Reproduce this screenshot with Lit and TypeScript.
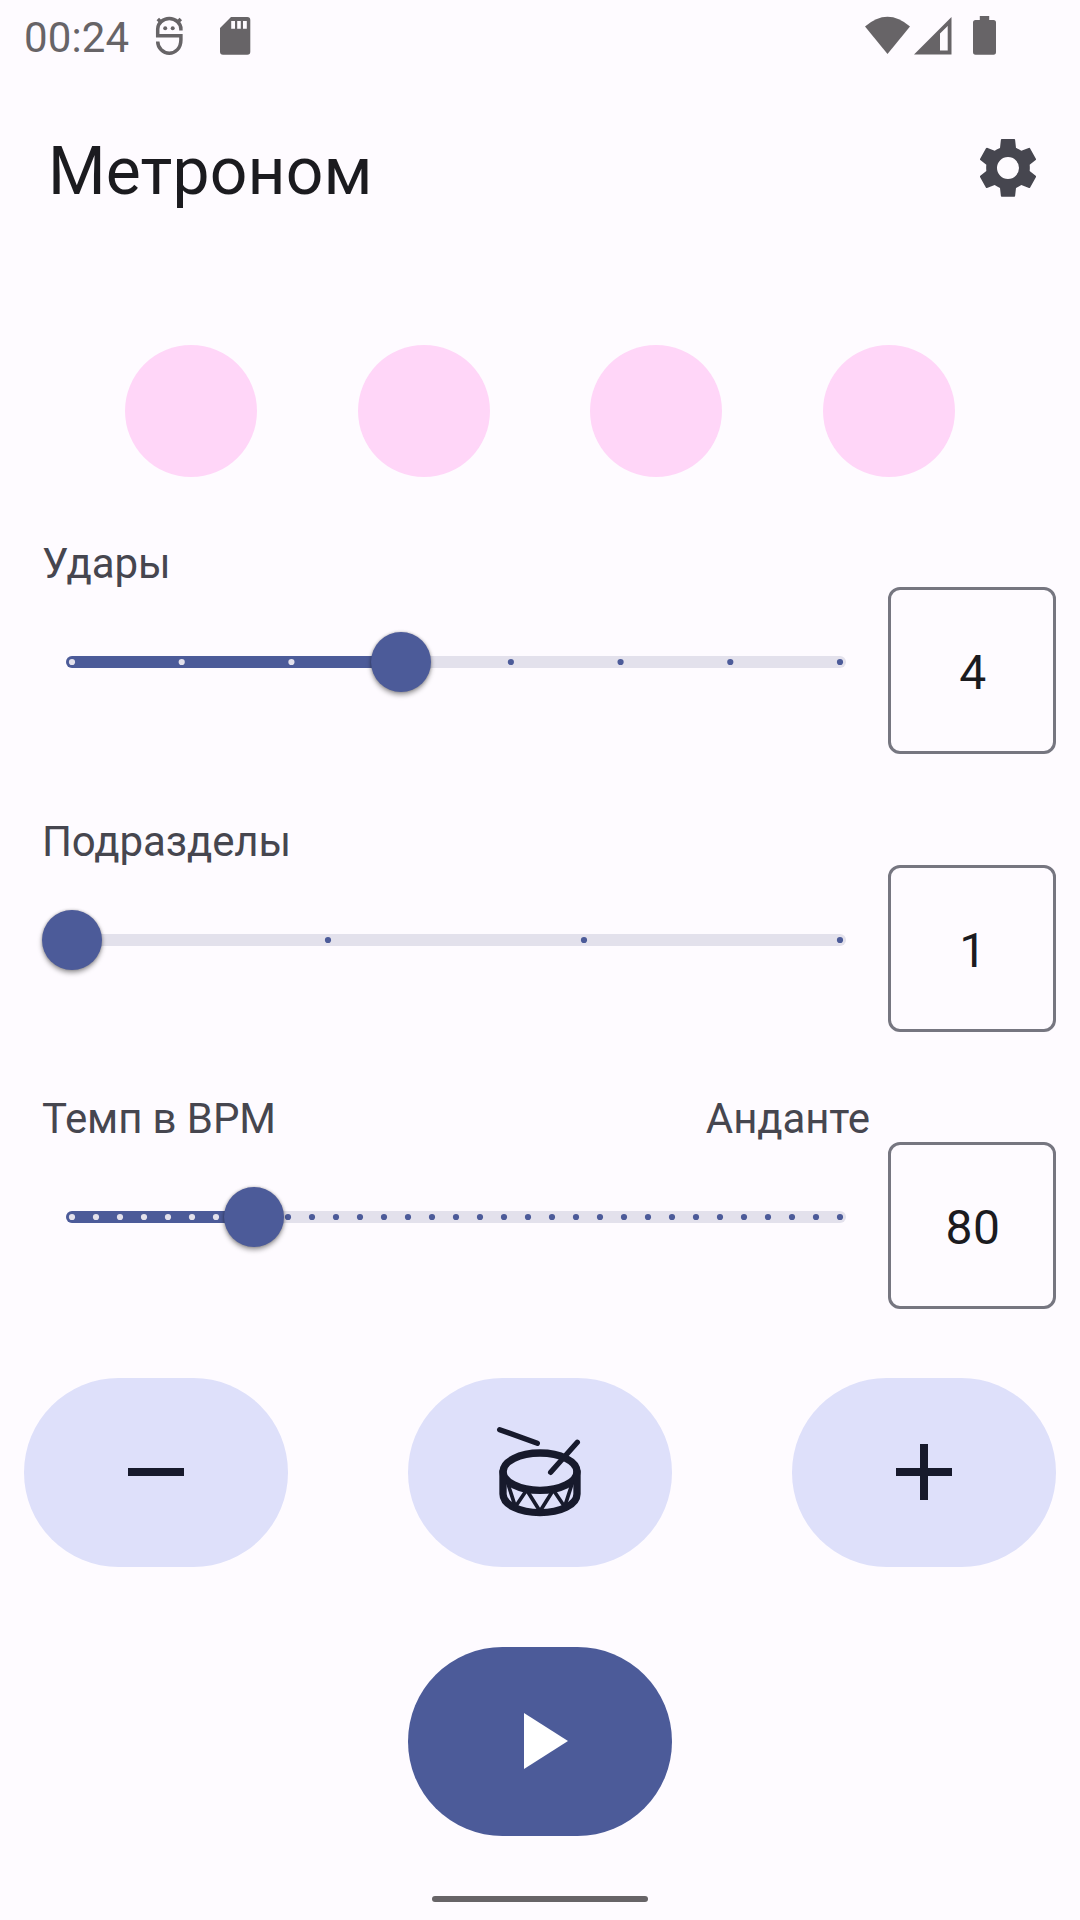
import { LitElement, html, svg, css } from "lit";
import { customElement, property } from "lit/decorators.js";

@customElement("value-slider")
class ValueSlider extends LitElement {
  @property({ type: Number }) steps = 7;
  @property({ type: Number }) fraction = 0;

  static styles = css`
    :host { display: block; position: relative; height: 60px; }
    svg { display: block; overflow: visible; }
    .track { fill: #e3e1ec; }
    .fill { fill: #4c5b99; }
    .tick { fill: #4c5b99; }
    .tick.on { fill: #e3e1ec; }
    .thumb {
      position: absolute; top: 0; width: 60px; height: 60px; border-radius: 50%;
      background: #4c5b99;
      box-shadow: 0 3px 5px rgba(0, 0, 0, 0.36), 0 0 3px rgba(0, 0, 0, 0.25);
    }
  `;

  render() {
    const pos = this.fraction * 768;
    const ticks = Array.from({ length: this.steps + 1 }, (_, i) => (i * 768) / this.steps);
    return html`
      <svg width="828" height="60" viewBox="0 0 828 60">
        <rect class="track" x="24" y="24" width="780" height="12" rx="6"></rect>
        <rect class="fill" x="24" y="24" width=${pos + 12} height="12" rx="6"></rect>
        ${ticks.map((t) => svg`<circle class="tick ${t <= pos ? "on" : ""}" cx=${30 + t} cy="30" r="3.1"></circle>`)}
      </svg>
      <div class="thumb" style="left:${pos}px"></div>
    `;
  }
}

@customElement("setting-row")
class SettingRow extends LitElement {
  @property() label = "";
  @property() note = "";
  @property() value = "";
  @property({ type: Number }) steps = 7;
  @property({ type: Number }) fraction = 0;

  static styles = css`
    :host { display: flex; justify-content: space-between; height: 214px; padding: 0 24px 0 42px; box-sizing: border-box; }
    .main { width: 828px; }
    .labels { display: flex; justify-content: space-between; height: 59px; line-height: 60px; padding-top: 1px; margin-bottom: 39px; font-size: 42px; letter-spacing: -0.1px; color: #46464f; }
    .box {
      box-sizing: border-box; width: 168px; height: 167px; margin-top: 54px;
      border: 3px solid #767680; border-radius: 12px;
      display: flex; align-items: center; justify-content: center;
      padding: 4px 0 0 2px; font-size: 48px; letter-spacing: 0.6px; color: #1b1b1f;
    }
  `;

  render() {
    return html`
      <div class="main">
        <div class="labels"><span>${this.label}</span><span>${this.note}</span></div>
        <value-slider .steps=${this.steps} .fraction=${this.fraction}></value-slider>
      </div>
      <div class="box">${this.value}</div>
    `;
  }
}

@customElement("app-root")
class AppRoot extends LitElement {
  static styles = css`
    :host {
      display: flex; flex-direction: column; width: 1080px; height: 1920px; overflow: hidden;
      background: #fefbff; color: #1b1b1f; font-family: Roboto, sans-serif;
    }
    svg { display: block; flex: none; }
    .status { display: flex; align-items: center; height: 72px; padding: 0 83px 0 24px; color: #676467; fill: currentColor; }
    .time { width: 128px; margin-top: 4px; font-size: 42px; line-height: 50px; letter-spacing: 0.1px; }
    .spacer { flex: 1; }
    .bar { display: flex; align-items: center; justify-content: space-between; height: 192px; padding: 0 36px 0 48px; }
    h1 { margin: 8px 0 0; font-size: 66px; font-weight: 400; line-height: 84px; letter-spacing: 0.15px; }
    .gear { fill: #46464f; }
    .beats { display: flex; justify-content: space-between; padding: 0 125px; margin-top: 81px; }
    .beat { width: 132px; height: 132px; border-radius: 50%; background: #ffd6f8; }
    .rows { display: flex; flex-direction: column; margin-top: 56px; gap: 64px; }
    .rows > :last-child { margin-top: -1px; }
    .actions { display: flex; justify-content: space-between; padding: 0 24px; margin-top: 76px; }
    .btn { display: flex; align-items: center; justify-content: center; box-sizing: border-box; width: 264px; height: 189px; padding-bottom: 1px; border-radius: 95px; background: #dee0fa; color: #171a2c; }
    .play { align-self: center; margin-top: 80px; background: #4c5b99; color: #fff; }
    .handle { align-self: center; width: 216px; height: 6px; border-radius: 3px; background: #676467; margin-top: 60px; }
  `;

  render() {
    return html`
      <div class="status">
        <span class="time">00:24</span>
        <svg width="34" height="44" viewBox="152 14 34 44" fill="none" stroke="currentColor" stroke-width="3.500">
          <path d="M180.900 30.500V29A11.600 10.500 0 0 0 157.700 29V35.700H180.900V40C180.900 48 175.500 53.200 169.300 53.200S157.700 48 157.700 41.500"></path>
          <path d="M157.800 19l4 4M180.800 19l-4 4"></path>
          <circle cx="165.200" cy="28.300" r="2" fill="currentColor" stroke="none"></circle>
          <circle cx="172.700" cy="28.300" r="2" fill="currentColor" stroke="none"></circle>
        </svg>
        <svg width="72" height="44" viewBox="186 14 72 44">
          <path fill-rule="evenodd" d="M231 17H247.300Q250.300 17 250.300 20V51.800Q250.300 54.800 247.300 54.800H223Q220 54.800 220 51.800V28ZM231.200 21V28.800H235V21ZM237.200 21V28.800H240.800V21ZM243 21V28.800H246.800V21Z"></path>
        </svg>
        <span class="spacer"></span>
        <svg width="136" height="44" viewBox="861 14 136 44">
          <path d="M865 26.500Q887.500 7 910 26.500L887.500 54Z"></path>
          <path fill-rule="evenodd" d="M951.500 17V54.500H914ZM947.700 26L940 33.500V50.500H947.700Z"></path>
          <path d="M979.800 16H989.200V20H993.500Q996 20 996 22.500V52Q996 54.700 993.500 54.700H975.500Q973 54.700 973 52V22.500Q973 20 975.500 20H979.800Z"></path>
        </svg>
      </div>
      <div class="bar">
        <h1>Метроном</h1>
        <svg class="gear" width="72" height="72" viewBox="456 396 216 216">
          <path fill-rule="evenodd" d="M545 417H583Q585 417 585.300 419L588 444Q597 447 604 452L628 443Q629 443 630 445L648 477Q648.500 479 647 480L629 494Q630 503 629 513L647 527Q648.500 529 648 531L630 563Q629 564.500 627 564L604 555Q597 560 588 564L585.300 588Q585 590.500 583 590.500H545Q543 590.500 542.700 588L540 564Q531 560 524 555L501 564Q499 564.500 498 563L480 531Q479.500 529 481 527L499 513Q498 503 499 494L481 480Q479.500 479 480 477L498 445Q499 443 501 443L524 452Q531 447 540 444L542.700 419Q543 417 545 417ZM564 471A33 33 0 1 0 564 537A33 33 0 1 0 564 471Z"></path>
        </svg>
      </div>
      <div class="beats">${[0, 1, 2, 3].map(() => html`<div class="beat"></div>`)}</div>
      <div class="rows">
        <setting-row label="Удары" value="4" .steps=${7} .fraction=${3 / 7}></setting-row>
        <setting-row label="Подразделы" value="1" .steps=${3} .fraction=${0}></setting-row>
        <setting-row label="Темп в BPM" note="Анданте" value="80" .steps=${32} .fraction=${182 / 768}></setting-row>
      </div>
      <div class="actions">
        <div class="btn">
          <svg width="56" height="56" viewBox="0 0 56 56" fill="currentColor"><path d="M0 24H56V32H0Z"></path></svg>
        </div>
        <div class="btn">
          <svg width="96" height="96" viewBox="276 162 288 288" fill="none" stroke="currentColor" stroke-linecap="round">
            <g stroke-width="16"><path d="M299 179L412 220M532 217L452 307"></path></g>
            <g stroke-width="22">
              <ellipse cx="420" cy="305" rx="111" ry="56"></ellipse>
              <path d="M309 305V372C309 404 358 428 420 428S531 404 531 372V305"></path>
            </g>
            <path stroke-width="11" stroke-linejoin="round" d="M325 345L346 410L380 360L420 424L460 360L494 410L515 345"></path>
          </svg>
        </div>
        <div class="btn">
          <svg width="56" height="56" viewBox="0 0 56 56" fill="currentColor"><path d="M0 24H24V0H32V24H56V32H32V56H24V32H0Z"></path></svg>
        </div>
      </div>
      <div class="btn play">
        <svg width="72" height="72" viewBox="0 0 72 72" fill="currentColor"><path d="M20 8L64 36L20 64Z"></path></svg>
      </div>
      <div class="handle"></div>
    `;
  }
}
